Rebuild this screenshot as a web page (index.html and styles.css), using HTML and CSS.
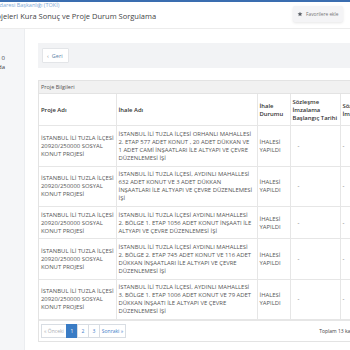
FILE: index.html
```html
<!DOCTYPE html>
<html lang="tr">
<head>
  <meta charset="UTF-8">
  <title>Kura Sonuç ve Proje Durum Sorgulama</title>
  <link rel="stylesheet" href="styles.css">
</head>
<body>
  <div class="top-bar"></div>

  <header class="page-head">
    <div class="head-titles">
      <div class="breadcrumb">İdaresi Başkanlığı (TOKİ)</div>
      <h1 class="page-title">Projeleri Kura Sonuç ve Proje Durum Sorgulama</h1>
    </div>
    <button class="fav-button">
      <svg class="fav-icon" viewBox="0 0 24 24">
        <path d="M12 2.5l2.9 6.1 6.6.8-4.9 4.6 1.3 6.6L12 17.3l-5.9 3.3 1.3-6.6-4.9-4.6 6.6-.8z" fill="currentColor"/>
      </svg>
      <span>Favorilere ekle</span>
    </button>
  </header>

  <div class="layout">
    <aside class="sidebar">
      <div class="side-item"><span>Başvurularım 0</span></div>
      <div class="side-item"><span>Hesabım burada</span></div>
    </aside>

    <main class="content">
      <div class="toolbar">
        <button class="back-button"><span class="chev">‹</span> Geri</button>
      </div>

      <div class="panel">
        <div class="panel-head">Proje Bilgileri</div>
        <table class="project-table">
          <colgroup>
            <col style="width: 77px">
            <col style="width: 141px">
            <col style="width: 33px">
            <col style="width: 50px">
            <col style="width: 50px">
            <col>
          </colgroup>
          <thead>
            <tr>
              <th>Proje Adı</th>
              <th>İhale Adı</th>
              <th>İhale Durumu</th>
              <th>Sözleşme İmzalama Başlangıç Tarihi</th>
              <th>Sözleşme İmzalama Tarihi</th>
              <th>Kura Tarihi</th>
            </tr>
          </thead>
          <tbody>
            <tr>
              <td class="lines">İSTANBUL İLİ TUZLA İLÇESİ<br>20920/250000 SOSYAL<br>KONUT PROJESİ</td>
              <td class="lines">İSTANBUL İLİ TUZLA İLÇESİ ORHANLI MAHALLESİ<br>2. ETAP 577 ADET KONUT , 20 ADET DÜKKAN VE<br>1 ADET CAMİ İNŞAATLARI İLE ALTYAPI VE ÇEVRE<br>DÜZENLEMESİ İŞİ</td>
              <td>İHALESİ YAPILDI</td>
              <td class="dash">-</td>
              <td>-</td>
              <td>-</td>
            </tr>
            <tr>
              <td class="lines">İSTANBUL İLİ TUZLA İLÇESİ<br>20920/250000 SOSYAL<br>KONUT PROJESİ</td>
              <td class="lines">İSTANBUL İLİ TUZLA İLÇESİ, AYDINLI MAHALLESİ<br>632 ADET KONUT VE 3 ADET DÜKKAN<br>İNŞAATLARI İLE ALTYAPI VE ÇEVRE DÜZENLEMESİ<br>İŞİ</td>
              <td>İHALESİ YAPILDI</td>
              <td class="dash">-</td>
              <td>-</td>
              <td>-</td>
            </tr>
            <tr>
              <td class="lines">İSTANBUL İLİ TUZLA İLÇESİ<br>20920/250000 SOSYAL<br>KONUT PROJESİ</td>
              <td class="lines">İSTANBUL İLİ TUZLA İLÇESİ AYDINLI MAHALLESİ<br>2. BÖLGE 1. ETAP 1056 ADET KONUT İNŞAATI İLE<br>ALTYAPI VE ÇEVRE DÜZENLEMESİ İŞİ</td>
              <td>İHALESİ YAPILDI</td>
              <td class="dash">-</td>
              <td>-</td>
              <td>-</td>
            </tr>
            <tr>
              <td class="lines">İSTANBUL İLİ TUZLA İLÇESİ<br>20920/250000 SOSYAL<br>KONUT PROJESİ</td>
              <td class="lines">İSTANBUL İLİ TUZLA İLÇESİ AYDINLI MAHALLESİ<br>2. BÖLGE 2. ETAP 745 ADET KONUT VE 116 ADET<br>DÜKKAN İNŞAATLARI İLE ALTYAPI VE ÇEVRE<br>DÜZENLEMESİ İŞİ</td>
              <td>İHALESİ YAPILDI</td>
              <td class="dash">-</td>
              <td>-</td>
              <td>-</td>
            </tr>
            <tr>
              <td class="lines">İSTANBUL İLİ TUZLA İLÇESİ<br>20920/250000 SOSYAL<br>KONUT PROJESİ</td>
              <td class="lines">İSTANBUL İLİ TUZLA İLÇESİ, AYDINLI MAHALLESİ<br>3. BÖLGE 1. ETAP 1006 ADET KONUT VE 79 ADET<br>DÜKKAN İNŞAATI İLE ALTYAPI VE ÇEVRE<br>DÜZENLEMESİ İŞİ</td>
              <td>İHALESİ YAPILDI</td>
              <td class="dash">-</td>
              <td>-</td>
              <td>-</td>
            </tr>
          </tbody>
        </table>

        <div class="table-foot">
          <div class="pager">
            <span class="page-link disabled">« Önceki</span>
            <span class="page-link num active">1</span>
            <span class="page-link num">2</span>
            <span class="page-link num">3</span>
            <span class="page-link">Sonraki »</span>
          </div>
          <div class="table-info">Toplam 13 kayıttan 1 - 5 arası gösteriliyor</div>
        </div>
      </div>
    </main>
  </div>
</body>
</html>
```

FILE: styles.css
```css
* {
  box-sizing: border-box;
}

body {
  margin: 0;
  width: 350px;
  height: 350px;
  overflow: hidden;
  background: #fff;
  color: #555;
  font-family: "Open Sans", "DejaVu Sans", sans-serif;
}

.top-bar {
  height: 2px;
  background: #3a6db0;
}

/* Page header */
.page-head {
  height: 27px;
  display: flex;
  justify-content: space-between;
  align-items: flex-start;
  border-bottom: 1px solid #ececec;
  overflow: hidden;
}

.head-titles {
  white-space: nowrap;
}

.breadcrumb {
  margin-left: -2px;
  font-size: 5.5px;
  line-height: 7px;
  color: #80a8d4;
}

.page-title {
  margin: 1.5px 0 0 -11px;
  font-size: 7.5px;
  font-weight: 400;
  line-height: 11px;
  color: #444;
}

.fav-button {
  margin: 4px 7px 0 0;
  width: 50px;
  height: 16px;
  padding: 0 4px;
  display: flex;
  align-items: center;
  gap: 3px;
  background: #f4f4f6;
  border: none;
  border-radius: 2px;
  box-shadow: 0 1px 3px rgba(0, 0, 0, 0.1);
  font-family: inherit;
  font-size: 4.8px;
  color: #777;
  white-space: nowrap;
}

.fav-icon {
  width: 6px;
  height: 6px;
  color: #5a5f66;
  flex-shrink: 0;
}

/* Body layout */
.layout {
  display: flex;
  height: 321px;
}

.sidebar {
  width: 25px;
  flex-shrink: 0;
  padding-top: 25px;
  background: #f5f6f8;
  border-right: 1px solid #ebedf0;
  overflow: hidden;
}

.side-item {
  display: flex;
  justify-content: flex-end;
  height: 9px;
  padding-right: 19px;
  font-size: 6px;
  line-height: 9px;
  color: #3e4247;
  white-space: nowrap;
}

.content {
  flex: 1;
  min-width: 0;
  padding: 14px 0 0 13px;
  overflow: hidden;
}

.toolbar {
  width: 420px;
  height: 25px;
  padding: 5px 4px;
  background: #f2f3f5;
}

.back-button {
  width: 27px;
  height: 15px;
  padding: 0 0 0 4px;
  display: flex;
  align-items: center;
  gap: 3px;
  background: #fff;
  border: 1px solid #e3e5e8;
  border-radius: 1px;
  font-family: inherit;
  font-size: 5.5px;
  color: #5d7fa6;
}

.chev {
  color: #8a8f96;
  font-size: 6px;
}

/* Panel + table */
.panel {
  margin-top: 12px;
  width: 420px;
  border: 1px solid #e3e3e3;
}

.panel-head {
  height: 13px;
  padding-left: 2px;
  background: #f1f1f1;
  border-bottom: 1px solid #e3e3e3;
  font-size: 5.5px;
  line-height: 12px;
  color: #555;
}

.project-table {
  width: 100%;
  table-layout: fixed;
  border-collapse: collapse;
}

.project-table th,
.project-table td {
  padding: 3.5px 1px 3.5px 2px;
  border: 1px solid #e6e6e6;
  vertical-align: middle;
  text-align: left;
  font-size: 5.9px;
  line-height: 8.1px;
}

.project-table th {
  font-weight: 600;
  color: #333;
}

.project-table td {
  color: #555;
}

.project-table td.lines {
  white-space: nowrap;
}

.project-table tr > :first-child {
  border-left: none;
}

.project-table thead th {
  border-top: none;
}

.project-table td.dash {
  padding-left: 7px;
}

/* Footer with pagination */
.table-foot {
  display: flex;
  align-items: center;
  padding: 3px 2px;
  border-top: 1px solid #e6e6e6;
}

.pager {
  display: flex;
}

.page-link {
  height: 14px;
  padding: 0 2px;
  border: 1px solid #d8dde3;
  font-size: 5px;
  line-height: 12px;
  color: #3d7cc9;
  white-space: nowrap;
}

.page-link + .page-link {
  margin-left: -1px;
}

.page-link.num {
  min-width: 12px;
  text-align: center;
}

.page-link.disabled {
  color: #a9adb3;
}

.page-link.active {
  background: #3a7cc5;
  border-color: #3a7cc5;
  color: #fff;
}

.table-info {
  margin-left: 193px;
  font-size: 5px;
  color: #444;
  white-space: nowrap;
}
```
